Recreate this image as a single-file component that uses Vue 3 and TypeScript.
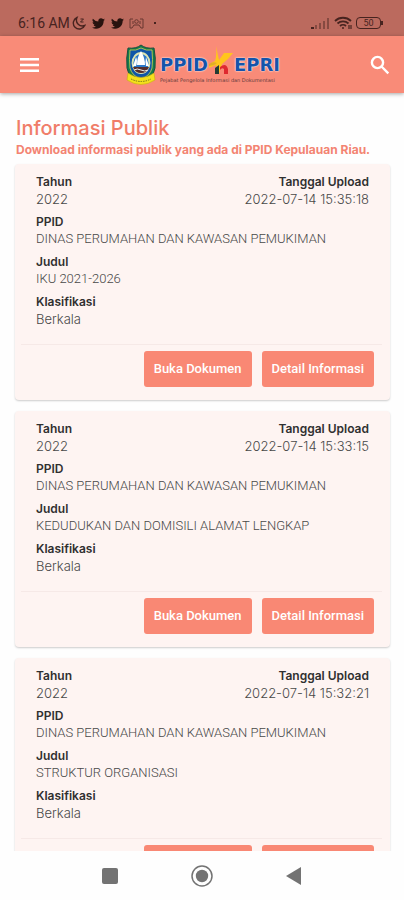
<script setup lang="ts">
interface PublicRecord {
  year: string
  uploaded: string
  office: string
  title: string
  category: string
}

const office = 'DINAS PERUMAHAN DAN KAWASAN PEMUKIMAN'

const records: PublicRecord[] = [
  { year: '2022', uploaded: '2022-07-14 15:35:18', office, title: 'IKU 2021-2026', category: 'Berkala' },
  { year: '2022', uploaded: '2022-07-14 15:33:15', office, title: 'KEDUDUKAN DAN DOMISILI ALAMAT LENGKAP', category: 'Berkala' },
  { year: '2022', uploaded: '2022-07-14 15:32:21', office, title: 'STRUKTUR ORGANISASI', category: 'Berkala' },
]
</script>

<template>
  <div class="screen">
    <div class="status">
      <div class="status-left">
        <span class="clock">6:16 AM</span>
        <svg width="14" height="14" viewBox="0 0 14 14" fill="none" stroke="currentColor" stroke-width="1.4">
          <path d="M5 1.500A6 6 0 1 0 12.800 9.500A6 6 0 0 1 5 1.500Z" />
          <path stroke-width="1" d="M8.500 3h3l-3 3h3" />
        </svg>
        <svg v-for="n in 2" :key="n" class="bird" width="13" height="13" viewBox="0 0 24 24" fill="currentColor">
          <path d="M24 4.6a10 10 0 0 1-2.800.8 5 5 0 0 0 2.100-2.700 10 10 0 0 1-3.100 1.200 4.900 4.900 0 0 0-8.400 4.500A14 14 0 0 1 1.700 3.200a4.900 4.900 0 0 0 1.500 6.500 4.900 4.900 0 0 1-2.200-.6 4.900 4.900 0 0 0 3.900 4.900 5 5 0 0 1-2.200.1 4.900 4.900 0 0 0 4.600 3.400A9.900 9.900 0 0 1 0 19.500a14 14 0 0 0 21.500-12.400A10 10 0 0 0 24 4.600Z" />
        </svg>
        <svg class="cast" width="15" height="11" viewBox="0 0 15 11" fill="none" stroke="currentColor" stroke-width="1">
          <path d="M4 1H1v9h2l2-3h5l2 3h2V1h-3M4 3v3M11 3v3" />
          <circle cx="7.500" cy="3.500" r="1.800" />
        </svg>
        <span class="dot"></span>
      </div>
      <div class="status-right">
        <svg width="20" height="13" viewBox="0 0 20 13" fill="currentColor">
          <path d="M1 10h3v2H1z" />
          <path opacity=".45" d="M5 8h2v4H5zM9 6h2v6H9zM13 4h2v8h-2zM17 1h2v11h-2z" />
        </svg>
        <svg width="18" height="14" viewBox="0 0 18 14" fill="none" stroke="currentColor" stroke-width="1.800">
          <path d="M1 5a11.500 11.500 0 0 1 16 0M3.500 7.500a8 8 0 0 1 11 0M6 10a4.400 4.400 0 0 1 6 0" />
          <circle cx="9" cy="12" r="1" fill="currentColor" stroke="none" />
          <path stroke-width="1.200" d="M15 9v4M17 9v4" />
        </svg>
        <span class="battery">50</span>
      </div>
    </div>

    <header class="appbar">
      <button class="icon-button" type="button" aria-label="Menu">
        <svg width="20" height="14" viewBox="0 0 20 14" fill="currentColor">
          <path d="M0 0h19v2.500H0zM0 5.700h19v2.500H0zM0 11.500h19v2.500H0z" />
        </svg>
      </button>
      <div class="brand">
        <svg class="crest" width="30" height="42" viewBox="0 0 30 42">
          <path d="M15 1Q20 5 28 4Q30 14 29 24Q27 35 15 39Q3 35 1 24Q0 14 2 4Q10 5 15 1Z" fill="#147b4a" stroke="#174f3d" />
          <path d="M15 4Q20 7 26 6Q27 16 26 24Q24 32 15 35Q6 32 4 24Q3 16 4 6Q10 7 15 4Z" fill="#0f55a8" stroke="#d5d34b" stroke-width=".8" />
          <ellipse cx="15" cy="19" rx="8.500" ry="10" fill="#2b78c8" stroke="#dce4b2" stroke-width="1.800" />
          <path d="M15 7Q19 14 19 21L11 21Q11 13 15 7Z" fill="#fff" />
          <path d="M10 13Q12 17 10 22L7 22ZM20 13Q19 18 20 22L23 22Z" fill="#fff" />
          <path d="M7 23H23Q21 29 15 29Q9 29 7 23Z" fill="#542d2b" />
          <path d="M8 26q3-2 7 0t7 0" fill="none" stroke="#eee" />
          <path d="M2 29Q15 38 28 29L29 36Q15 45 1 36Z" fill="#f4e01b" stroke="#c7aa18" stroke-width=".6" />
          <path d="M5 35Q15 40 25 35" fill="none" stroke="#74721d" stroke-dasharray="1.500 1" />
        </svg>
        <div class="wordmark">
          <div class="wordmark-name">
            <span>PPID</span>
            <svg class="keris" width="26" height="32" viewBox="0 0 26 32" aria-label="K" role="img">
              <path d="M8 1L11 15L16 8L25 8Q20 15 14 19L11 29H7Q9 23 8 20L1 23Q1 18 7 16Q9 10 8 1Z" fill="#ffc51c" />
              <path d="M1 19Q5 16 9 18L6 20L1 21Z" fill="#e1ad27" />
              <path d="M7 23L11 20L11 29H7Z" fill="#233b33" />
              <path d="M12 22Q18 17 20 24L20 29H16V24Q14 22 12 25Z" fill="#df292f" />
            </svg>
            <span>EPRI</span>
          </div>
          <div class="tagline">Pejabat Pengelola Informasi dan Dokumentasi</div>
        </div>
      </div>
      <button class="icon-button" type="button" aria-label="Cari">
        <svg width="20" height="20" viewBox="0 0 20 20" fill="none" stroke="currentColor" stroke-width="2.400">
          <circle cx="7.500" cy="7.500" r="5.600" />
          <path d="M11.500 11.500L18.300 18.300" />
        </svg>
      </button>
    </header>

    <main class="content">
      <div class="heading">
        <h1>Informasi Publik</h1>
        <p class="intro">Download informasi publik yang ada di PPID Kepulauan Riau.</p>
      </div>
      <div class="cards">
        <article v-for="record in records" :key="record.uploaded" class="card">
          <dl class="fields">
            <div class="pair">
              <div>
                <dt>Tahun</dt>
                <dd>{{ record.year }}</dd>
              </div>
              <div class="upload">
                <dt>Tanggal Upload</dt>
                <dd>{{ record.uploaded }}</dd>
              </div>
            </div>
            <div>
              <dt>PPID</dt>
              <dd class="capitals">{{ record.office }}</dd>
            </div>
            <div>
              <dt>Judul</dt>
              <dd class="capitals">{{ record.title }}</dd>
            </div>
            <div>
              <dt>Klasifikasi</dt>
              <dd>{{ record.category }}</dd>
            </div>
          </dl>
          <div class="actions">
            <button type="button">Buka Dokumen</button>
            <button type="button">Detail Informasi</button>
          </div>
        </article>
      </div>
    </main>

    <nav class="system-nav">
      <button type="button" aria-label="Aplikasi terbaru">
        <svg width="24" height="24" viewBox="0 0 24 24" fill="currentColor"><rect x="4" y="4" width="16" height="16" rx="2" /></svg>
      </button>
      <button type="button" aria-label="Beranda">
        <svg width="24" height="24" viewBox="0 0 24 24" fill="currentColor">
          <circle cx="12" cy="12" r="10" fill="none" stroke="currentColor" stroke-width="1.500" />
          <circle cx="12" cy="12" r="6.200" />
        </svg>
      </button>
      <button type="button" aria-label="Kembali">
        <svg width="24" height="24" viewBox="0 0 24 24" fill="currentColor"><path d="M4 12L19 3V21Z" /></svg>
      </button>
    </nav>
  </div>
</template>

<style>
body {
  background: #fefefe;
}
</style>

<style scoped>
.screen {
  display: flex;
  flex-direction: column;
  height: 100vh;
  background: #fefefe;
  font-family: Inter, "Open Sans", sans-serif;
}

svg {
  display: block;
  flex: none;
}

button {
  border: 0;
  padding: 0;
  background: none;
  color: inherit;
  cursor: pointer;
}

.status {
  display: flex;
  flex: none;
  align-items: flex-end;
  justify-content: space-between;
  height: 36px;
  padding: 0 23px 5px 18px;
  box-sizing: border-box;
  background: #bb6a5e;
  color: #47231f;
}

.status-left,
.status-right {
  display: flex;
  align-items: center;
  height: 16px;
}

.clock {
  font: 14px/16px Roboto, sans-serif;
  margin-right: 2px;
}

.bird {
  margin-left: 6px;
  color: #29130f;
}

.cast {
  margin-left: 5px;
  opacity: 0.7;
}

.dot {
  width: 2px;
  height: 2px;
  margin-left: 10px;
  background: currentColor;
}

.status-right {
  gap: 4px;
}

.battery {
  position: relative;
  width: 23px;
  border: 1px solid currentColor;
  border-radius: 4px;
  font: 9px/10px Roboto, sans-serif;
  text-align: center;
}

.battery::after {
  content: "";
  position: absolute;
  top: 3px;
  right: -3px;
  width: 2px;
  height: 4px;
  background: currentColor;
}

.appbar {
  position: relative;
  display: flex;
  flex: none;
  align-items: center;
  justify-content: space-between;
  height: 57px;
  padding: 0 4px 0 10px;
  background: #f98b78;
  color: #fff;
  box-shadow: 0 1px 4px rgba(0, 0, 0, 0.35);
}

.icon-button {
  display: grid;
  place-items: center;
  width: 40px;
  height: 40px;
}

.brand {
  display: flex;
  align-items: center;
  gap: 4px;
  padding-right: 4px;
}

.wordmark-name {
  display: flex;
  align-items: flex-end;
  height: 32px;
  color: #1554aa;
  font: bold 18px/24px "DejaVu Sans", sans-serif;
  text-shadow: 0 0 1px #fff, 0 0 2px #fff;
}

.tagline {
  height: 8px;
  color: #633a3b;
  font: 5px/6px "DejaVu Sans", sans-serif;
  white-space: nowrap;
}

.content {
  flex: 1;
  min-height: 0;
  overflow-y: auto;
  scrollbar-width: none;
  padding: 22px 14px 0 15px;
}

.heading {
  padding-left: 1px;
}

h1 {
  margin: 0;
  color: #f07d69;
  font-size: 20px;
  font-weight: 500;
  line-height: 26px;
}

.intro {
  margin: 0;
  color: #f38472;
  font-size: 12px;
  font-weight: 700;
  line-height: 17px;
}

.cards {
  display: grid;
  gap: 11px;
  padding-top: 6px;
}

.card {
  padding: 9px 0 13px;
  border-radius: 4px;
  background: #fef4f2;
  box-shadow: 0 1px 2px rgba(0, 0, 0, 0.2);
}

.fields {
  display: grid;
  gap: 5px;
  margin: 0;
  padding: 0 21px 16px;
}

.pair {
  display: flex;
  justify-content: space-between;
}

.upload {
  text-align: right;
}

dt {
  color: #303030;
  font-size: 12px;
  font-weight: 600;
  line-height: 17px;
}

dd {
  margin: 0;
  color: #484848;
  font-size: 13px;
  font-weight: 300;
  line-height: 18px;
}

.capitals {
  font-family: Roboto, sans-serif;
}

.actions {
  display: flex;
  justify-content: flex-end;
  gap: 10px;
  margin: 0 8px 0 6px;
  padding: 6px 8px 0;
  border-top: 1px solid #f6e9e7;
}

.actions button {
  height: 36px;
  padding: 0 10px;
  border-radius: 3px;
  background: #f98874;
  color: #fff;
  font: 500 13px/16px Roboto, sans-serif;
}

.system-nav {
  display: flex;
  flex: none;
  align-items: center;
  justify-content: center;
  gap: 68px;
  height: 49px;
  color: #737373;
}
</style>
